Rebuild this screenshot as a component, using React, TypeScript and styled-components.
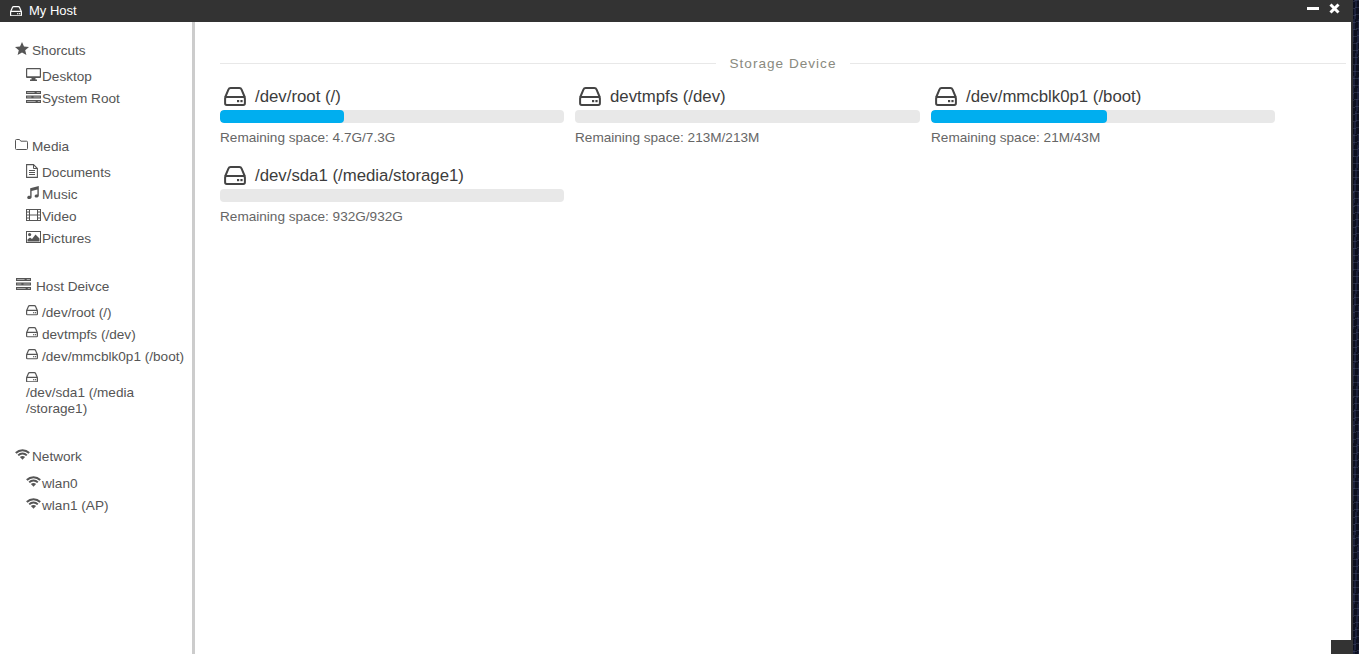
import React from "react";
import styled, { createGlobalStyle } from "styled-components";

const Global = createGlobalStyle`
  html, body { margin: 0; padding: 0; height: 100%; overflow: hidden; background: #0d1020; }
  #root { height: 100%; }
  * { box-sizing: border-box; }
`;

const Desktop = styled.div`
  width: 1359px;
  height: 654px;
  overflow: hidden;
  font-family: "Liberation Sans", Arial, sans-serif;
  background:
    repeating-linear-gradient(172deg, rgba(120,130,170,.22) 0 1px, transparent 1px 7px),
    repeating-linear-gradient(95deg, rgba(60,70,120,.3) 0 2px, transparent 2px 5px),
    #0c0f1e;
`;

const Win = styled.div`
  position: relative;
  width: 1353px;
  height: 654px;
  display: flex;
  flex-direction: column;
  background: #fff;
  border-right: 2px solid #333;
`;

const TitleBar = styled.header`
  height: 22px;
  flex: none;
  background: #333;
  color: #fff;
  display: flex;
  align-items: center;
  padding: 0 11px 0 10px;
  font-size: 13px;
`;

const TitleText = styled.span`
  margin: -2px 0 0 7px;
  flex: 1;
`;

const WinButtons = styled.div`
  display: flex;
  align-items: center;
  gap: 10px;
  margin-top: -6px;
`;

const Body = styled.div`
  flex: 1;
  display: flex;
  min-height: 0;
`;

const Sidebar = styled.aside`
  width: 195px;
  flex: none;
  border-right: 3px solid #ccc;
  padding-top: 19px;
  color: #555;
  font-size: 13.6px;
`;

const Group = styled.section<{ $bottom?: number }>`
  margin-bottom: ${(p) => p.$bottom ?? 28}px;
`;

const GroupHead = styled.div<{ $gap?: number; $left?: number; $below?: number }>`
  display: flex;
  align-items: center;
  gap: ${(p) => p.$gap ?? 3}px;
  height: 18px;
  padding-left: ${(p) => p.$left ?? 15}px;
  margin-bottom: ${(p) => p.$below ?? 6}px;
  svg { margin-top: -4px; }
`;

const Item = styled.div`
  display: flex;
  align-items: center;
  gap: 1px;
  height: 22px;
  padding-left: 26px;
  white-space: nowrap;
  svg { margin-top: -3px; }
`;

const DevItem = styled(Item)`
  gap: 4px;
`;

const WrapItem = styled.div`
  padding: 5px 8px 0 26px;
  line-height: 16px;
  svg { display: block; margin-bottom: 3px; }
`;

const Main = styled.main`
  flex: 1;
  min-width: 0;
  padding: 32px 5px 0 25px;
  color: #444;
`;

const SectionTitle = styled.div`
  display: flex;
  align-items: center;
  gap: 14px;
  height: 18px;
  color: #8a8a80;
  font-size: 13.6px;
  letter-spacing: 1px;
  white-space: nowrap;
  &::before, &::after {
    content: "";
    flex: 1;
    height: 1px;
    background: #e8e8e8;
  }
`;

const Cards = styled.div`
  display: grid;
  grid-template-columns: 344px 345px 344px;
  column-gap: 11px;
  margin-top: 10px;
`;

const Card = styled.article`
  height: 79px;
  padding-top: 2px;
`;

const CardHead = styled.div`
  display: flex;
  align-items: center;
  gap: 9px;
  height: 26px;
  padding-left: 4px;
  color: #3c3c3c;
  font-size: 16.8px;
  svg { margin-top: -2px; }
`;

const Bar = styled.div`
  height: 13px;
  border-radius: 4px;
  background: #e8e8e8;
  overflow: hidden;
`;

const Fill = styled.div`
  height: 100%;
  border-radius: 4px;
  background: #00aeef;
`;

const Remain = styled.div`
  margin-top: 6px;
  font-size: 13.6px;
  line-height: 17px;
  color: #666;
`;

const Corner = styled.div`
  position: absolute;
  right: 0;
  bottom: 0;
  width: 20px;
  height: 14px;
  background: #333;
`;

const Hdd = ({ size = 12, color = "#555", stroke = 2.2 }: { size?: number; color?: string; stroke?: number }) => (
  <svg width={size} height={(size * 19) / 22} viewBox="0 0 22 19" fill="none" style={{ flex: "none" }}>
    <path d="M1.1 10.5 4.4 2.6C4.8 1.6 5.6 1.1 6.6 1.1H15.4C16.4 1.1 17.2 1.6 17.6 2.6L20.9 10.5" stroke={color} strokeWidth={stroke} />
    <rect x="1.1" y="10" width="19.8" height="7.9" rx="1.6" stroke={color} strokeWidth={stroke} />
    <rect x="13" y="13" width="2.2" height="2.2" fill={color} />
    <rect x="16.4" y="13" width="2.2" height="2.2" fill={color} />
  </svg>
);

type IconProps = { w?: number; h?: number };
const C = "#555";

const Star = ({ w = 14, h = 13 }: IconProps) => (
  <svg width={w} height={h} viewBox="0 0 14 13" style={{ flex: "none" }}>
    <path d="M7 0 9 4.5 14 5 10.2 8.2 11.4 13 7 10.4 2.6 13 3.8 8.2 0 5 5 4.5Z" fill={C} />
  </svg>
);
const Monitor = () => (
  <svg width="15" height="13" viewBox="0 0 15 13" style={{ flex: "none" }}>
    <path fillRule="evenodd" d="M1 0H14A1 1 0 0 1 15 1V9A1 1 0 0 1 14 10H1A1 1 0 0 1 0 9V1A1 1 0 0 1 1 0ZM1.2 1.2V8.2H13.8V1.2Z" fill={C} />
    <path d="M5.5 10H9.5V11.5H11V13H4V11.5H5.5Z" fill={C} />
  </svg>
);
const Tasks = ({ w = 15, h = 12 }: IconProps) => (
  <svg width={w} height={h} viewBox="0 0 14 12" preserveAspectRatio="none" style={{ flex: "none" }}>
    <rect width="14" height="3" fill={C} />
    <rect y="4.5" width="14" height="3" fill={C} />
    <rect y="9" width="14" height="3" fill={C} />
    <path d="M1 1H8V2H1ZM10 1H13V2H10ZM1 5.5H5V6.5H1ZM7 5.5H13V6.5H7ZM1 10H9V11H1ZM11 10H13V11H11Z" fill="#aaa" />
  </svg>
);
const Folder = () => (
  <svg width="13" height="11" viewBox="0 0 13 11" fill="none" style={{ flex: "none", marginRight: 1 }}>
    <path d="M.5 9.5V1.5A1 1 0 0 1 1.5.5H4.5L5.8 2.2H11.5A1 1 0 0 1 12.5 3.2V9.5A1 1 0 0 1 11.5 10.5H1.5A1 1 0 0 1 .5 9.5Z" stroke={C} />
  </svg>
);
const Doc = () => (
  <svg width="12" height="14" viewBox="0 0 12 14" fill="none" style={{ flex: "none", marginRight: 3 }}>
    <path d="M.6.6H7.5L11.4 4.5V13.4H.6Z" stroke={C} strokeWidth="1.1" />
    <path d="M7.5.6V4.5H11.4M3 6.5H9M3 8.5H9M3 10.5H9" stroke={C} />
  </svg>
);
const Music = () => (
  <svg width="13" height="13" viewBox="0 0 13 13" style={{ flex: "none", marginRight: 2 }}>
    <path d="M4.2 2.2 12.8 0V9.8C12.8 11 11.6 11.6 10.6 11.6 9.5 11.6 8.6 11 8.6 10S9.6 8.4 10.6 8.4C10.9 8.4 11.2 8.5 11.4 8.6V3.6L5.6 5.1V11.2C5.6 12.4 4.4 13 3.2 13 2.1 13 1.2 12.4 1.2 11.4S2.2 9.8 3.2 9.8C3.6 9.8 3.9 9.9 4.2 10Z" fill={C} />
  </svg>
);
const Film = () => (
  <svg width="15" height="12" viewBox="0 0 15 12" fill="none" style={{ flex: "none" }}>
    <rect x=".5" y=".5" width="14" height="11" stroke={C} />
    <path d="M3.5 0V12M11.5 0V12M3.5 6H11.5M0 3H3.5M0 6H3.5M0 9H3.5M11.5 3H15M11.5 6H15M11.5 9H15" stroke={C} />
  </svg>
);
const Picture = () => (
  <svg width="15" height="12" viewBox="0 0 15 12" fill="none" style={{ flex: "none" }}>
    <rect x=".5" y=".5" width="14" height="11" stroke={C} />
    <circle cx="3.6" cy="3.6" r="1.6" fill={C} />
    <path d="M1.5 10.5V8.5L4 6.5 6 8 9.5 3.5 13.5 7.5V10.5Z" fill={C} />
  </svg>
);
const Wifi = () => (
  <svg width="15" height="11" viewBox="0 0 15 11" fill="none" style={{ flex: "none" }}>
    <path d="M.8 4C4.6.2 10.4.2 14.2 4" stroke={C} strokeWidth="2" />
    <path d="M3.2 6.4C5.6 3.9 9.4 3.9 11.8 6.4" stroke={C} strokeWidth="1.9" />
    <path d="M4.9 7.9C6.4 6.6 8.6 6.6 10.1 7.9L7.5 10.8Z" fill={C} />
  </svg>
);

const disks = [
  { name: "/dev/root (/)", remain: "4.7G/7.3G", pct: 36 },
  { name: "devtmpfs (/dev)", remain: "213M/213M", pct: 0 },
  { name: "/dev/mmcblk0p1 (/boot)", remain: "21M/43M", pct: 51.2 },
  { name: "/dev/sda1 (/media/storage1)", remain: "932G/932G", pct: 0 },
];

export default function App() {
  return (
    <Desktop>
      <Global />
      <Win>
        <TitleBar>
          <Hdd size={12} color="#fff" stroke={2.2} />
          <TitleText>My Host</TitleText>
          <WinButtons>
            <svg width="12" height="3" viewBox="0 0 12 3"><rect width="12" height="3" fill="#fff" /></svg>
            <svg width="11" height="11" viewBox="0 0 11 11"><path d="M1.5 1.5 9.5 9.5M9.5 1.5 1.5 9.5" stroke="#fff" strokeWidth="3" /></svg>
          </WinButtons>
        </TitleBar>
        <Body>
          <Sidebar>
            <Group>
              <GroupHead><Star />Shorcuts</GroupHead>
              <Item><Monitor />Desktop</Item>
              <Item><Tasks />System Root</Item>
            </Group>
            <Group>
              <GroupHead><Folder />Media</GroupHead>
              <Item><Doc />Documents</Item>
              <Item><Music />Music</Item>
              <Item><Film />Video</Item>
              <Item><Picture />Pictures</Item>
            </Group>
            <Group $bottom={30}>
              <GroupHead $gap={5} $left={16}><Tasks />Host Deivce</GroupHead>
              <DevItem><Hdd />/dev/root (/)</DevItem>
              <DevItem><Hdd />devtmpfs (/dev)</DevItem>
              <DevItem><Hdd />/dev/mmcblk0p1 (/boot)</DevItem>
              <WrapItem><Hdd />/dev/sda1 (/media<br />/storage1)</WrapItem>
            </Group>
            <Group>
              <GroupHead $gap={2} $below={7}><Wifi />Network</GroupHead>
              <Item><Wifi />wlan0</Item>
              <Item><Wifi />wlan1 (AP)</Item>
            </Group>
          </Sidebar>
          <Main>
            <SectionTitle>Storage Device</SectionTitle>
            <Cards>
              {disks.map((d) => (
                <Card key={d.name}>
                  <CardHead><Hdd size={22} color="#444" stroke={2} />{d.name}</CardHead>
                  <Bar>{d.pct > 0 && <Fill style={{ width: `${d.pct}%` }} />}</Bar>
                  <Remain>Remaining space: {d.remain}</Remain>
                </Card>
              ))}
            </Cards>
          </Main>
        </Body>
        <Corner />
      </Win>
    </Desktop>
  );
}
